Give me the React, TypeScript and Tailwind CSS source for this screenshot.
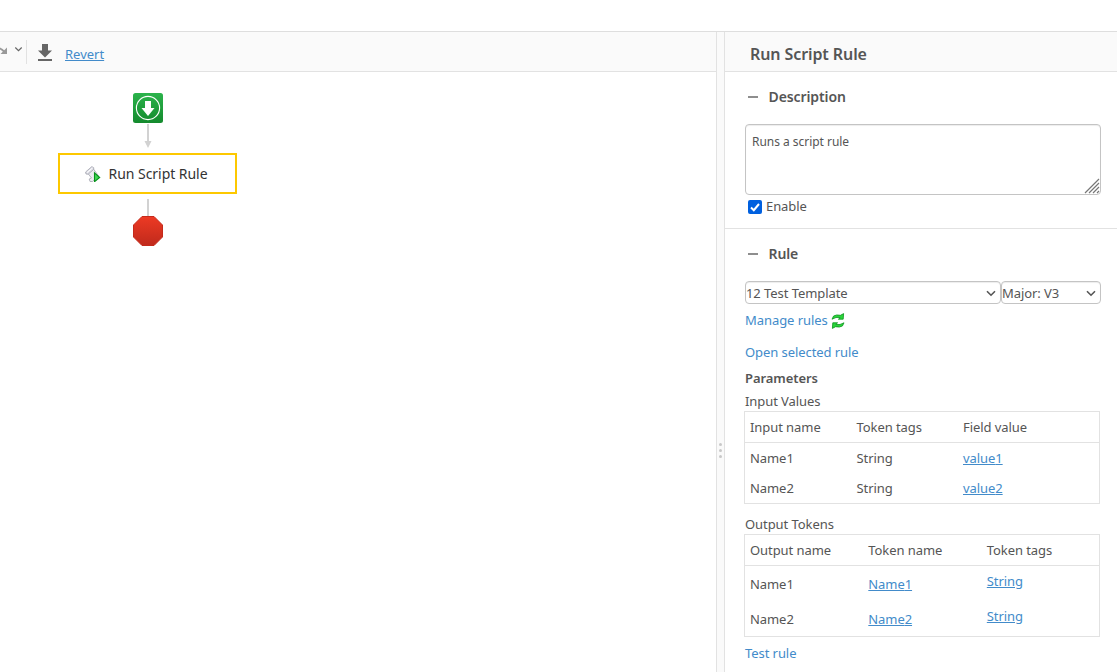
import React from "react";

function Chevron() {
  return (
    <svg width="10" height="7" viewBox="0 0 10 7" className="mt-px" fill="none" stroke="#555" strokeWidth="1.6">
      <path d="M1 1.2 L5 5.2 L9 1.2" />
    </svg>
  );
}

function Section({ title }: { title: string }) {
  return (
    <div className="flex h-[20px] items-center pl-[3px]">
      <div className="h-[2px] w-[10px] bg-[#8e8e8e]" />
      <h2 className="ml-[10.500px] text-[14px] leading-[20px] font-semibold tracking-[-0.100px]">{title}</h2>
    </div>
  );
}

const link = "text-[#428bca]";
const ulink = "text-[#428bca] underline underline-offset-[1px]";

function Toolbar() {
  return (
    <div className="flex h-[40px] shrink-0 items-center border-b border-[#e2e2e2] bg-[#fafafa]">
      <svg width="26" height="24" viewBox="0 0 26 24" className="mt-px" fill="none">
        <path d="M-2 8.500 C0 7.500 2 9 5 12.500" stroke="#999" strokeWidth="2" />
        <path d="M7 7.500v6.500H.5z" fill="#999" />
        <path d="M15.300 7.500l3.200 3.200 3.200-3.200" stroke="#666" strokeWidth="1.200" />
      </svg>
      <div className="h-[24px] w-px bg-[#e2e2e2]" />
      <svg width="14" height="18" viewBox="0 0 14 18" className="mt-[3px] ml-[11px]" fill="#666">
        <path d="M4 0h6v6.500h4l-7 7-7-7h4zM0 15h14v2H0z" />
      </svg>
      <a className={`mt-[5px] ml-[13px] text-[13px] leading-[18px] ${ulink}`}>Revert</a>
    </div>
  );
}

function Flow() {
  return (
    <div className="ml-[58px] flex w-[180px] flex-col items-center pt-[21px]">
      <svg width="30" height="30" viewBox="0 0 30 30">
        <defs>
          <linearGradient id="green" x1="0" y1="0" x2="0" y2="1">
            <stop offset="0" stopColor="#2bb34b" />
            <stop offset="1" stopColor="#148a2d" />
          </linearGradient>
        </defs>
        <rect width="30" height="30" rx="2.500" fill="url(#green)" />
        <circle cx="15" cy="15" r="11.600" fill="none" stroke="#fff" strokeWidth="1.100" />
        <path d="M12 8h6v7h3.500L15 23l-6.500-8H12z" fill="#fff" />
      </svg>
      <svg width="10" height="30" viewBox="0 0 10 30" fill="#d2d2d2">
        <path d="M4 1h2v17h2.500L5 25 1.500 18H4z" />
      </svg>
      <div className="-ml-px flex h-[41px] w-[179px] items-center border-2 border-[#fdc800] pl-[25px]">
        <svg width="16" height="16" viewBox="0 0 16 16">
          <path d="M3 7.500L8.500 3 13.500 10 7.500 15.500 5 15.500 4.200 13 6.500 12z" fill="#ececf1" stroke="#a3a4ae" strokeWidth=".8" />
          <path d="M.6 6L6.800.6 8.800 1.800 8.600 3.400 3.200 8.200 1 8z" fill="#dedee6" stroke="#a3a4ae" strokeWidth=".8" />
          <path d="M2 6.600L7.500 2" stroke="#fff" />
          <path d="M9.500 6.800l5.200 4.700-5.200 4.200z" fill="#3fd653" stroke="#07911b" strokeWidth="1.100" />
        </svg>
        <span className="ml-[7.500px] text-[14px] leading-[20px] tracking-[-0.040px] text-[#333]">Run Script Rule</span>
      </div>
      <div className="mt-[5px] h-[17px] w-[2px] bg-[#d2d2d2]" />
      <svg width="30" height="30" viewBox="0 0 30 30">
        <defs>
          <linearGradient id="red" x1="0" y1="0" x2="0" y2="1">
            <stop offset="0" stopColor="#ed3a24" />
            <stop offset="1" stopColor="#c02a1c" />
          </linearGradient>
        </defs>
        <path d="M9 .5h12L29.500 9v12L21 29.500H9L.5 21V9z" fill="url(#red)" stroke="#c52a1b" />
      </svg>
    </div>
  );
}

function Splitter() {
  return (
    <div className="flex w-[9px] shrink-0 flex-col items-center gap-[3px] border-x border-[#e2e2e2] bg-[#fafafa] pt-[411px]">
      <div className="size-[3px] rounded-full bg-[#c8c8c8]" />
      <div className="size-[3px] rounded-full bg-[#c8c8c8]" />
      <div className="size-[3px] rounded-full bg-[#c8c8c8]" />
    </div>
  );
}

export default function App() {
  return (
    <div className="flex h-[672px] w-[1117px] flex-col overflow-hidden bg-white pt-[31px] font-['Noto_Sans',sans-serif] text-[13px] leading-[18px] text-[#555]">
      <div className="flex min-h-0 flex-1 border-t border-[#dedede]">
        <main className="flex w-[716px] shrink-0 flex-col">
          <Toolbar />
          <Flow />
        </main>
        <Splitter />
        <aside className="flex min-w-0 flex-1 flex-col tracking-[-0.070px]">
          <header className="flex h-[40px] shrink-0 items-center border-b border-[#e2e2e2] bg-[#fafafa] pt-[5px] pl-[25px]">
            <h1 className="text-[16px] leading-[24px] font-semibold tracking-[-0.090px]">Run Script Rule</h1>
          </header>
          <section className="h-[157px] shrink-0 border-b border-[#e2e2e2] pt-[15px] pr-[16px] pl-[20px]">
            <Section title="Description" />
            <div className="mt-[17px] flex h-[71px] rounded-[4px] border border-[#c4c4c4] pt-[8px] pl-[6px] text-[12px] tracking-[-0.030px] shadow-[inset_0_1px_1px_rgba(0,0,0,0.075)]">
              <span className="flex-1">Runs a script rule</span>
              <svg width="16" height="16" viewBox="0 0 16 16" className="self-end" stroke="#777" strokeWidth="1.200">
                <path d="M1 15L15 1M5 15L15 5M9 15l6-6M13 15l2-2" />
              </svg>
            </div>
            <label className="mt-[2px] flex items-center pl-[3px]">
              <svg width="14" height="14" viewBox="0 0 14 14" className="mt-[2px]">
                <rect width="14" height="14" rx="2" fill="#0060df" />
                <path d="M3 7.500l2.800 2.700L11 4" fill="none" stroke="#fff" strokeWidth="2" />
              </svg>
              <span className="ml-[4px]">Enable</span>
            </label>
          </section>
          <section className="flex flex-col items-start pt-[15px] pr-[17px] pl-[20px]">
            <Section title="Rule" />
            <div className="mt-[17px] flex h-[23px]">
              <div className="flex w-[256px] items-center justify-between rounded-[4px] border border-[#c4c4c4] pr-[4px] shadow-[inset_0_1px_1px_rgba(0,0,0,0.075)]">
                <span>12 Test Template</span>
                <Chevron />
              </div>
              <div className="flex w-[100px] items-center justify-between rounded-[4px] border border-[#c4c4c4] pr-[4px] shadow-[inset_0_1px_1px_rgba(0,0,0,0.075)]">
                <span>Major: V3</span>
                <Chevron />
              </div>
            </div>
            <div className="mt-[7px] flex h-[18px] items-center">
              <a className={link}>Manage rules</a>
              <svg width="14" height="16" viewBox="0 0 14 16" className="mt-[2px] ml-[3px]" fill="#2bd63b" stroke="#08931a" strokeWidth=".8">
                <path d="M1 6.200L2.600 3Q5.500 1.300 9.500 2.300L12.600.6 12.200 6.200H7.400L9.200 4.500Q5 3.600 1 6.200z" />
                <path d="M13 9.800L11.400 13Q8.500 14.700 4.500 13.700L1.400 15.400 1.800 9.800H6.600L4.800 11.500Q9 12.400 13 9.800z" />
              </svg>
            </div>
            <a className={`mt-[14px] ${link}`}>Open selected rule</a>
            <div className="mt-[8px] font-semibold">Parameters</div>
            <div className="mt-[5px]">Input Values</div>
            <div className="mt-px -ml-px w-[356px] border border-[#e2e2e2]">
              <div className="grid h-[31px] grid-cols-[106.500px_106.500px_1fr] items-center border-b border-[#e2e2e2] pl-[5px]">
                <span>Input name</span>
                <span>Token tags</span>
                <span>Field value</span>
              </div>
              {["1", "2"].map((n) => (
                <div key={n} className="grid h-[30px] grid-cols-[106.500px_106.500px_1fr] items-center pl-[5px]">
                  <span>Name{n}</span>
                  <span>String</span>
                  <a className={ulink}>value{n}</a>
                </div>
              ))}
            </div>
            <div className="mt-[11px]">Output Tokens</div>
            <div className="mt-px -ml-px w-[356px] border border-[#e2e2e2]">
              <div className="grid h-[31px] grid-cols-[118.300px_118.500px_1fr] items-center border-b border-[#e2e2e2] pl-[5px]">
                <span>Output name</span>
                <span>Token name</span>
                <span>Token tags</span>
              </div>
              {["1", "2"].map((n) => (
                <div key={n} className="grid h-[35px] grid-cols-[118.300px_118.500px_1fr] items-center pl-[5px]">
                  <span>Name{n}</span>
                  <a className={ulink}>Name{n}</a>
                  <a className={`mb-[5px] ${ulink}`}>String</a>
                </div>
              ))}
            </div>
            <a className={`mt-[7px] ${link}`}>Test rule</a>
          </section>
        </aside>
      </div>
    </div>
  );
}
